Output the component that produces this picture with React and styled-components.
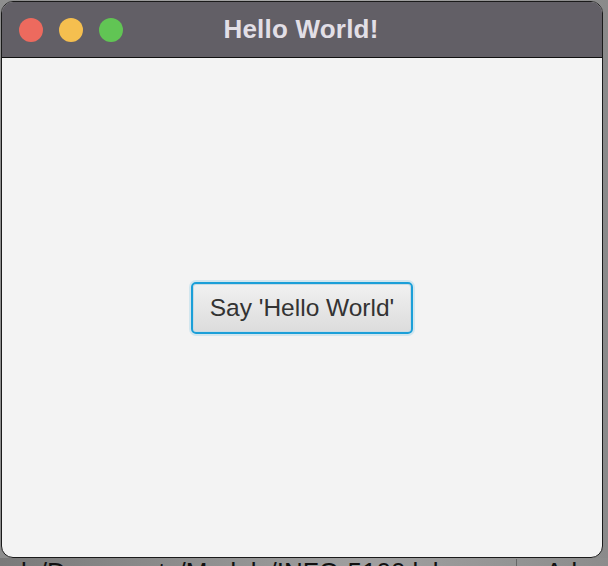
import React from "react";
import styled, { createGlobalStyle } from "styled-components";

const Global = createGlobalStyle`
  html, body { margin: 0; padding: 0; }
  body {
    width: 608px;
    height: 566px;
    overflow: hidden;
    background: linear-gradient(to right, #8e8e8e, #a9a9a9 50%, #8a8a8a);
    font-family: "Liberation Sans", Arial, sans-serif;
  }
`;

const Page = styled.div`
  width: 608px;
  height: 566px;
  display: flex;
  flex-direction: column;
  overflow: hidden;
`;

const Window = styled.div`
  margin: 1px 0 0 1px;
  width: 600px;
  height: 555px;
  flex: none;
  border: 1px solid #1a1a1a;
  border-radius: 12px;
  overflow: hidden;
  display: flex;
  flex-direction: column;
  background: #f3f3f3;
`;

const TitleBar = styled.div`
  height: 55px;
  flex: none;
  background: #625f66;
  border-bottom: 1px solid #111;
  display: flex;
  align-items: center;
  position: relative;
  padding-left: 17px;
  gap: 16px;
`;

const Light = styled.span`
  width: 24px;
  height: 24px;
  border-radius: 50%;
  background: ${(p) => p.$c};
  flex: none;
`;

const Title = styled.div`
  position: absolute;
  left: 0;
  right: 0;
  top: 0;
  bottom: 0;
  display: flex;
  align-items: center;
  justify-content: center;
  color: #e2dfe6;
  font-weight: bold;
  font-size: 26px;
  letter-spacing: 0.2px;
  pointer-events: none;
  padding-right: 2px;
`;

const Content = styled.div`
  flex: 1;
  display: flex;
  align-items: center;
  justify-content: center;
`;

const Button = styled.button`
  width: 222px;
  height: 52px;
  box-sizing: border-box;
  border: 2px solid #1b9fd8;
  border-radius: 5px;
  box-shadow: 0 0 0 2px rgba(27, 159, 216, 0.15), inset 0 0 0 1px #c9dbe4;
  background: linear-gradient(#f1f1f1, #dcdcdc);
  color: #333;
  font-family: "Liberation Sans", Arial, sans-serif;
  font-size: 24.5px;
  padding: 0;
  cursor: default;
`;

const Strip = styled.div`
  height: 8px;
  overflow: hidden;
  display: flex;
  align-items: flex-start;
  background: linear-gradient(to right, #7a7a7a, #a0a0a0 60%, #8c8c8c);
`;

const StripText = styled.div`
  white-space: nowrap;
  font-size: 26px;
  line-height: 26px;
  color: #111;
  margin-top: 1px;
  padding-left: 21px;
  display: flex;
`;

const Close = styled.span`
  color: #555;
  margin-left: 18px;
`;

const Sep = styled.span`
  display: inline-block;
  width: 1px;
  height: 26px;
  background: #666;
  margin: 0 28px 0 36px;
`;

export default function App() {
  return (
    <>
      <Global />
      <Page>
        <Window>
          <TitleBar>
            <Light $c="#ed6a5e" />
            <Light $c="#f5bf4f" />
            <Light $c="#61c554" />
            <Title>Hello World!</Title>
          </TitleBar>
          <Content>
            <Button>Say 'Hello World'</Button>
          </Content>
        </Window>
        <Strip>
          <StripText>
            <span>ls/Documents/Models/INFO-5100 lab</span>
            <Close>×</Close>
            <Sep />
            <span>Ad</span>
          </StripText>
        </Strip>
      </Page>
    </>
  );
}
